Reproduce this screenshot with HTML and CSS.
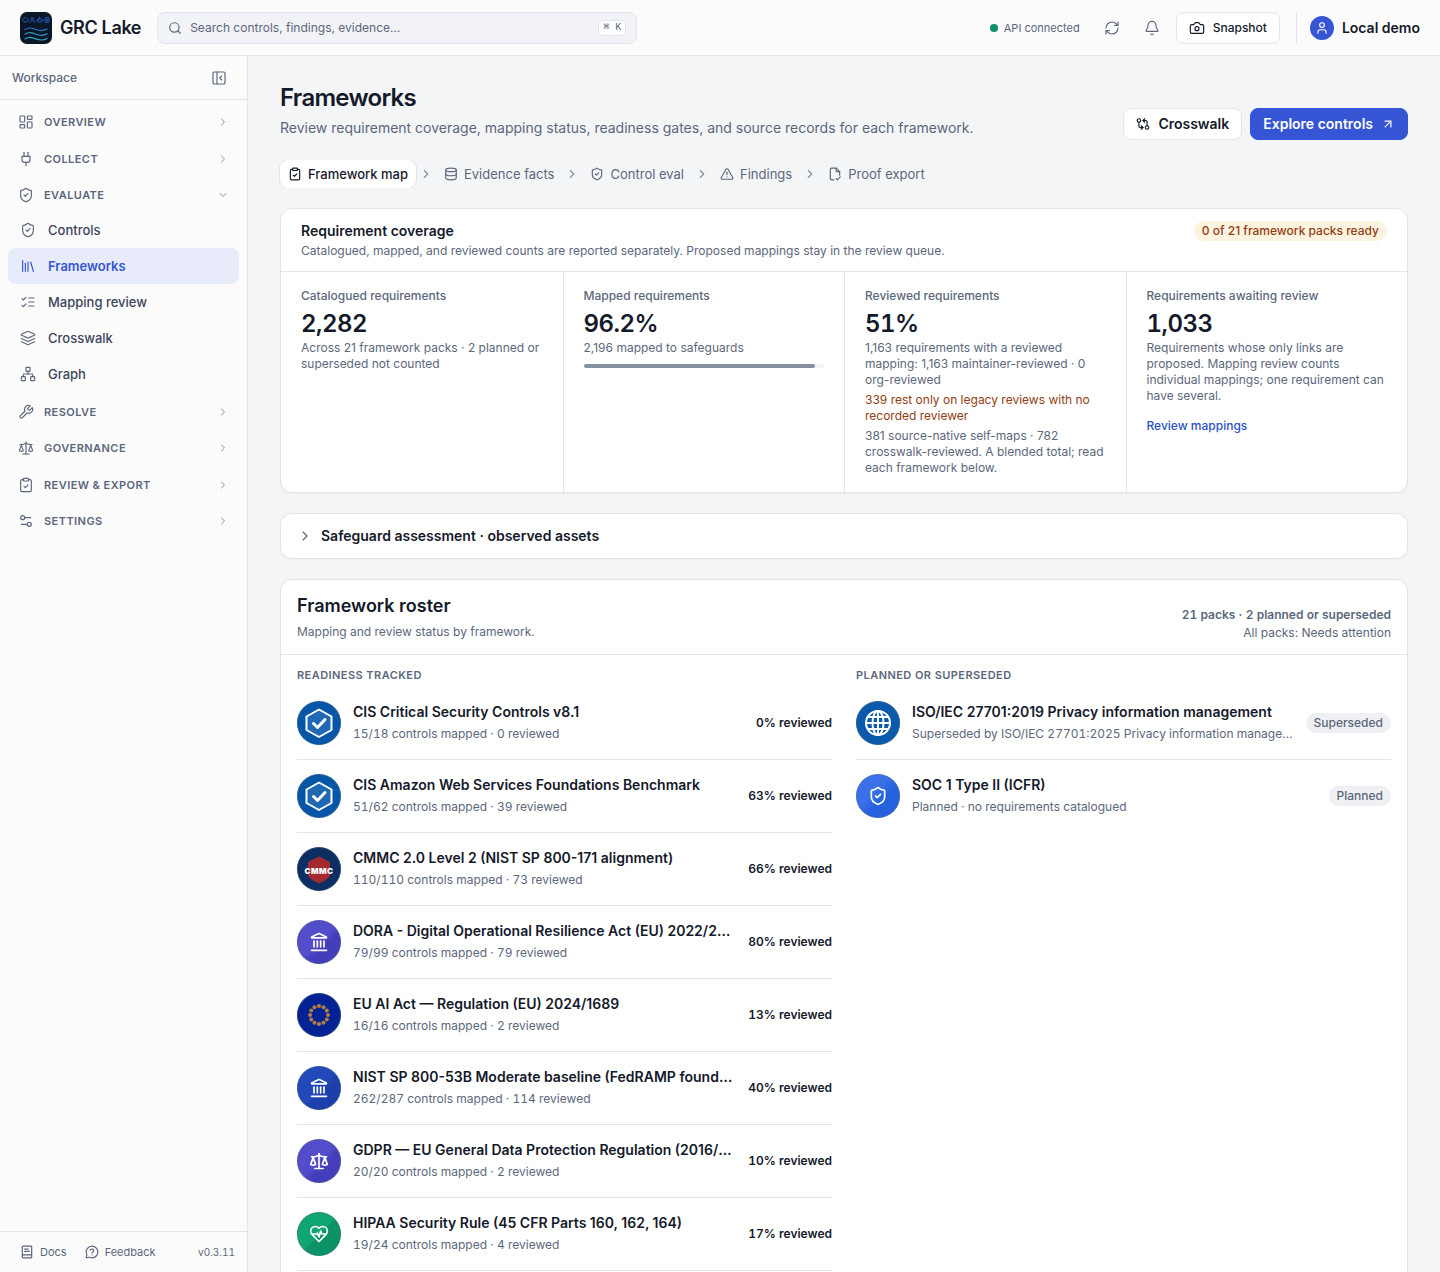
FILE: index.html
```html
<!DOCTYPE html>
<html lang="en">
<head>
<meta charset="utf-8">
<meta name="viewport" content="width=device-width, initial-scale=1">
<title>Frameworks · GRC Lake</title>
<link rel="stylesheet" href="styles.css">
</head>
<body>
<svg class="sprite" aria-hidden="true">
  <symbol id="search" viewBox="0 0 24 24"><circle cx="11" cy="11" r="8"/><path d="m21 21-4.3-4.3"/></symbol>
  <symbol id="refresh" viewBox="0 0 24 24"><path d="M3 12a9 9 0 0 1 9-9 9.75 9.75 0 0 1 6.74 2.74L21 8"/><path d="M21 3v5h-5"/><path d="M21 12a9 9 0 0 1-9 9 9.75 9.75 0 0 1-6.74-2.74L3 16"/><path d="M8 16H3v5"/></symbol>
  <symbol id="bell" viewBox="0 0 24 24"><path d="M10.268 21a2 2 0 0 0 3.464 0"/><path d="M3.262 15.326A1 1 0 0 0 4 17h16a1 1 0 0 0 .74-1.673C19.41 13.956 18 12.499 18 8A6 6 0 0 0 6 8c0 4.499-1.411 5.956-2.738 7.326"/></symbol>
  <symbol id="camera" viewBox="0 0 24 24"><path d="M14.5 4h-5L7 7H4a2 2 0 0 0-2 2v9a2 2 0 0 0 2 2h16a2 2 0 0 0 2-2V9a2 2 0 0 0-2-2h-3l-2.500-3z"/><circle cx="12" cy="13" r="3"/></symbol>
  <symbol id="user" viewBox="0 0 24 24"><circle cx="12" cy="7" r="4"/><path d="M19 21v-2a4 4 0 0 0-4-4H9a4 4 0 0 0-4 4v2"/></symbol>
  <symbol id="panel" viewBox="0 0 24 24"><rect width="18" height="18" x="3" y="3" rx="2"/><path d="M9 3v18"/><path d="m16 15-3-3 3-3"/></symbol>
  <symbol id="chevron-right" viewBox="0 0 24 24"><path d="m9 18 6-6-6-6"/></symbol>
  <symbol id="chevron-down" viewBox="0 0 24 24"><path d="m6 9 6 6 6-6"/></symbol>
  <symbol id="dashboard" viewBox="0 0 24 24"><rect width="7" height="9" x="3" y="3" rx="1"/><rect width="7" height="5" x="14" y="3" rx="1"/><rect width="7" height="9" x="14" y="12" rx="1"/><rect width="7" height="5" x="3" y="16" rx="1"/></symbol>
  <symbol id="plug" viewBox="0 0 24 24"><path d="M12 22v-5"/><path d="M9 8V2"/><path d="M15 8V2"/><path d="M18 8v5a4 4 0 0 1-4 4h-4a4 4 0 0 1-4-4V8Z"/></symbol>
  <symbol id="shield" viewBox="0 0 24 24"><path d="M20 13c0 5-3.500 7.500-7.660 8.950a1 1 0 0 1-.67-.01C7.500 20.500 4 18 4 13V6a1 1 0 0 1 1-1c2 0 4.500-1.200 6.240-2.720a1.170 1.170 0 0 1 1.520 0C14.510 3.810 17 5 19 5a1 1 0 0 1 1 1z"/><path d="m9 12 2 2 4-4"/></symbol>
  <symbol id="library" viewBox="0 0 24 24"><path d="m16 6 4 14"/><path d="M12 6v14"/><path d="M8 8v12"/><path d="M4 4v16"/></symbol>
  <symbol id="checks" viewBox="0 0 24 24"><path d="m3 17 2 2 4-4"/><path d="m3 7 2 2 4-4"/><path d="M13 6h8"/><path d="M13 12h8"/><path d="M13 18h8"/></symbol>
  <symbol id="layers" viewBox="0 0 24 24"><path d="m12.830 2.180a2 2 0 0 0-1.660 0L2.600 6.080a1 1 0 0 0 0 1.830l8.580 3.910a2 2 0 0 0 1.660 0l8.580-3.900a1 1 0 0 0 0-1.830Z"/><path d="m22 17.650-9.170 4.160a2 2 0 0 1-1.660 0L2 17.650"/><path d="m22 12.650-9.170 4.160a2 2 0 0 1-1.660 0L2 12.650"/></symbol>
  <symbol id="network" viewBox="0 0 24 24"><rect x="16" y="16" width="6" height="6" rx="1"/><rect x="2" y="16" width="6" height="6" rx="1"/><rect x="9" y="2" width="6" height="6" rx="1"/><path d="M5 16v-3a1 1 0 0 1 1-1h12a1 1 0 0 1 1 1v3"/><path d="M12 12V8"/></symbol>
  <symbol id="wrench" viewBox="0 0 24 24"><path d="M14.700 6.300a1 1 0 0 0 0 1.400l1.600 1.600a1 1 0 0 0 1.400 0l3.770-3.770a6 6 0 0 1-7.940 7.940l-6.910 6.910a2.120 2.120 0 0 1-3-3l6.910-6.910a6 6 0 0 1 7.940-7.940l-3.760 3.760z"/></symbol>
  <symbol id="scale" viewBox="0 0 24 24"><path d="m16 16 3-8 3 8c-.87.65-1.920 1-3 1s-2.130-.35-3-1Z"/><path d="m2 16 3-8 3 8c-.87.65-1.920 1-3 1s-2.130-.35-3-1Z"/><path d="M7 21h10"/><path d="M12 3v18"/><path d="M3 7h2c2 0 5-1 7-2 2 1 5 2 7 2h2"/></symbol>
  <symbol id="clipboard" viewBox="0 0 24 24"><rect width="8" height="4" x="8" y="2" rx="1"/><path d="M16 4h2a2 2 0 0 1 2 2v14a2 2 0 0 1-2 2H6a2 2 0 0 1-2-2V6a2 2 0 0 1 2-2h2"/><path d="m9 14 2 2 4-4"/></symbol>
  <symbol id="sliders" viewBox="0 0 24 24"><path d="M19 7h-9"/><path d="M14 17H5"/><circle cx="17" cy="17" r="3"/><circle cx="7" cy="7" r="3"/></symbol>
  <symbol id="book" viewBox="0 0 24 24"><path d="M4 19V5a2 2 0 0 1 2-3h13a1 1 0 0 1 1 1v18a1 1 0 0 1-1 1H6a2 2 0 0 1-2-3Z"/><path d="M4 17h16"/><path d="M8 7h6"/><path d="M8 11h8"/></symbol>
  <symbol id="help" viewBox="0 0 24 24"><path d="M2.992 16.342a2 2 0 0 1 .094 1.167l-1.065 3.290a1 1 0 0 0 1.236 1.168l3.413-.998a2 2 0 0 1 1.099.092 10 10 0 1 0-4.777-4.719"/><path d="M9.090 9a3 3 0 0 1 5.830 1c0 2-3 3-3 3"/><path d="M12 17h.01"/></symbol>
  <symbol id="compare" viewBox="0 0 24 24"><circle cx="5" cy="6" r="3"/><path d="M12 6h5a2 2 0 0 1 2 2v7"/><path d="m15 9-3-3 3-3"/><circle cx="19" cy="18" r="3"/><path d="M12 18H7a2 2 0 0 1-2-2V9"/><path d="m9 15 3 3-3 3"/></symbol>
  <symbol id="arrow" viewBox="0 0 24 24"><path d="M7 7h10v10"/><path d="M7 17 17 7"/></symbol>
  <symbol id="database" viewBox="0 0 24 24"><ellipse cx="12" cy="5" rx="9" ry="3"/><path d="M3 5v14a9 3 0 0 0 18 0V5"/><path d="M3 12a9 3 0 0 0 18 0"/></symbol>
  <symbol id="warning" viewBox="0 0 24 24"><path d="m21.730 18-8-14a2 2 0 0 0-3.480 0l-8 14A2 2 0 0 0 4 21h16a2 2 0 0 0 1.730-3"/><path d="M12 9v4"/><path d="M12 17h.01"/></symbol>
  <symbol id="file-check" viewBox="0 0 24 24"><path d="M10 22H6a2 2 0 0 1-2-2V4a2 2 0 0 1 2-2h8l6 6v6"/><path d="M14 2v5a1 1 0 0 0 1 1h5"/><path d="m14 20 2 2 5-5"/></symbol>
  <symbol id="landmark" viewBox="0 0 24 24"><path d="M3 22h18"/><path d="M6 18v-7"/><path d="M10 18v-7"/><path d="M14 18v-7"/><path d="M18 18v-7"/><path d="M11.119 2.205a2 2 0 0 1 1.762 0l7.840 3.846A.5.5 0 0 1 20.500 7h-17a.5.5 0 0 1-.22-.949z"/></symbol>
  <symbol id="heart" viewBox="0 0 24 24"><path d="M19 14c1.490-1.460 3-3.210 3-5.500A5.500 5.500 0 0 0 16.500 3c-1.760 0-3 .5-4.500 2-1.500-1.500-2.740-2-4.500-2A5.500 5.500 0 0 0 2 8.500c0 2.300 1.500 4.050 3 5.500l7 7Z"/><path d="M3.220 12H9.500l.5-1 2 4.500 2-7 1.500 3.500h5.270"/></symbol>
  <symbol id="hex-check" viewBox="0 0 44 44"><path class="hex" d="M22 8.500 34.500 15.500v13.500L22 36 9.500 29V15.500Z"/><path class="tick" d="m16.500 22.500 4 4L28 18.500"/></symbol>
  <symbol id="globe" viewBox="0 0 44 44"><circle cx="22" cy="22" r="12"/><ellipse cx="22" cy="22" rx="5.500" ry="12"/><path d="M22 10v24M10 22h24M12 16h20M12 28h20"/></symbol>
</svg>

<div class="app">
  <header class="topbar">
    <a class="brand" href="#">
      <svg class="logo" viewBox="0 0 32 32" aria-hidden="true">
        <rect width="32" height="32" rx="7" fill="#0b1727"/>
        <g fill="none" stroke="#2459b8" stroke-width="1">
          <path d="M3.500 9.700a1.500 1.500 0 0 1 0-2.800 2 2 0 0 1 3.600-.3 1.600 1.600 0 0 1 .2 3.100Z"/>
          <circle cx="12.200" cy="6.500" r="1.200"/><path d="M9.800 10.500q.5-2.500 2.400-2.500t2.400 2.500"/>
          <rect x="17.500" y="7" width="4.500" height="3" rx="1"/><path d="M19.700 5v2M16.500 8.500h1M22 8.500h1"/>
          <rect x="25" y="5.500" width="4" height="5" rx="1"/><path d="M26 7.300h2M26 8.800h2"/>
        </g>
        <g fill="none" stroke-width="1.200" stroke-linecap="round">
          <path stroke="#2878d0" d="M5 17.500c4-2.500 7-1.500 11 0s7 2 11-.5"/>
          <path stroke="#2f9fc7" d="M5 22.200c4-2.500 7-1.500 11 0s7 2 11-.5"/>
          <path stroke="#31a9c0" d="M5 26.900c4-2.500 7-1.500 11 0s7 2 11-.5"/>
        </g>
      </svg>
      <span>GRC Lake</span>
    </a>
    <label class="search">
      <svg class="icon"><use href="#search"/></svg>
      <input type="search" aria-label="Search" placeholder="Search controls, findings, evidence…">
      <kbd>⌘ K</kbd>
    </label>
    <div class="top-actions">
      <span class="status">API connected</span>
      <button class="icon-button" aria-label="Refresh"><svg class="icon"><use href="#refresh"/></svg></button>
      <button class="icon-button" aria-label="Notifications"><svg class="icon"><use href="#bell"/></svg></button>
      <button class="button button-small"><svg class="icon"><use href="#camera"/></svg>Snapshot</button>
      <div class="account">
        <button class="account-button"><span class="avatar"><svg class="icon-small"><use href="#user"/></svg></span>Local demo</button>
      </div>
    </div>
  </header>

  <aside class="sidebar">
    <div class="sidebar-head">
      <span>Workspace</span>
      <button class="icon-button" aria-label="Collapse sidebar"><svg class="icon"><use href="#panel"/></svg></button>
    </div>
    <nav class="nav" aria-label="Workspace">
      <button class="group"><svg class="icon"><use href="#dashboard"/></svg><span>Overview</span><svg class="chevron"><use href="#chevron-right"/></svg></button>
      <button class="group"><svg class="icon"><use href="#plug"/></svg><span>Collect</span><svg class="chevron"><use href="#chevron-right"/></svg></button>
      <div class="group-open">
        <button class="group" aria-expanded="true"><svg class="icon"><use href="#shield"/></svg><span>Evaluate</span><svg class="chevron"><use href="#chevron-down"/></svg></button>
        <a class="nav-item" href="#"><svg class="icon"><use href="#shield"/></svg>Controls</a>
        <a class="nav-item current" href="#" aria-current="page"><svg class="icon"><use href="#library"/></svg>Frameworks</a>
        <a class="nav-item" href="#"><svg class="icon"><use href="#checks"/></svg>Mapping review</a>
        <a class="nav-item" href="#"><svg class="icon"><use href="#layers"/></svg>Crosswalk</a>
        <a class="nav-item" href="#"><svg class="icon"><use href="#network"/></svg>Graph</a>
      </div>
      <button class="group"><svg class="icon"><use href="#wrench"/></svg><span>Resolve</span><svg class="chevron"><use href="#chevron-right"/></svg></button>
      <button class="group"><svg class="icon"><use href="#scale"/></svg><span>Governance</span><svg class="chevron"><use href="#chevron-right"/></svg></button>
      <button class="group"><svg class="icon"><use href="#clipboard"/></svg><span>Review &amp; export</span><svg class="chevron"><use href="#chevron-right"/></svg></button>
      <button class="group"><svg class="icon"><use href="#sliders"/></svg><span>Settings</span><svg class="chevron"><use href="#chevron-right"/></svg></button>
    </nav>
    <div class="sidebar-foot">
      <a href="#"><svg class="icon-small"><use href="#book"/></svg>Docs</a>
      <a href="#"><svg class="icon-small"><use href="#help"/></svg>Feedback</a>
      <span class="version">v0.3.11</span>
    </div>
  </aside>

  <main class="main">
    <div class="page-head">
      <div>
        <h1>Frameworks</h1>
        <p>Review requirement coverage, mapping status, readiness gates, and source records for each framework.</p>
      </div>
      <div class="page-actions">
        <a class="button" href="#"><svg class="icon-small"><use href="#compare"/></svg>Crosswalk</a>
        <a class="button button-primary" href="#">Explore controls<svg class="icon-small"><use href="#arrow"/></svg></a>
      </div>
    </div>

    <nav class="steps" aria-label="Pipeline">
      <a class="step active" href="#"><svg class="icon-small"><use href="#clipboard"/></svg>Framework map</a>
      <svg class="step-sep"><use href="#chevron-right"/></svg>
      <a class="step" href="#"><svg class="icon-small"><use href="#database"/></svg>Evidence facts</a>
      <svg class="step-sep"><use href="#chevron-right"/></svg>
      <a class="step" href="#"><svg class="icon-small"><use href="#shield"/></svg>Control eval</a>
      <svg class="step-sep"><use href="#chevron-right"/></svg>
      <a class="step" href="#"><svg class="icon-small"><use href="#warning"/></svg>Findings</a>
      <svg class="step-sep"><use href="#chevron-right"/></svg>
      <a class="step" href="#"><svg class="icon-small"><use href="#file-check"/></svg>Proof export</a>
    </nav>

    <section class="card">
      <div class="coverage-head">
        <div>
          <h2>Requirement coverage</h2>
          <p>Catalogued, mapped, and reviewed counts are reported separately. Proposed mappings stay in the review queue.</p>
        </div>
        <span class="pill pill-warn">0 of 21 framework packs ready</span>
      </div>
      <div class="stats">
        <div class="stat">
          <h3>Catalogued requirements</h3>
          <strong>2,282</strong>
          <p>Across 21 framework packs · 2 planned or superseded not counted</p>
        </div>
        <div class="stat">
          <h3>Mapped requirements</h3>
          <strong>96.2%</strong>
          <p>2,196 mapped to safeguards</p>
          <div class="meter"><div class="meter-fill" style="width: 96.2%"></div></div>
        </div>
        <div class="stat">
          <h3>Reviewed requirements</h3>
          <strong>51%</strong>
          <p>1,163 requirements with a reviewed mapping: 1,163 maintainer-reviewed · 0 org-reviewed</p>
          <p class="warn">339 rest only on legacy reviews with no recorded reviewer</p>
          <p>381 source-native self-maps · 782 crosswalk-reviewed. A blended total; read each framework below.</p>
        </div>
        <div class="stat">
          <h3>Requirements awaiting review</h3>
          <strong>1,033</strong>
          <p>Requirements whose only links are proposed. Mapping review counts individual mappings; one requirement can have several.</p>
          <a class="link" href="#">Review mappings</a>
        </div>
      </div>
    </section>

    <details class="card assessment">
      <summary><svg class="icon"><use href="#chevron-right"/></svg>Safeguard assessment · observed assets</summary>
    </details>

    <section class="card">
      <div class="roster-head">
        <div>
          <h2>Framework roster</h2>
          <p>Mapping and review status by framework.</p>
        </div>
        <div class="roster-summary">
          <strong>21 packs · 2 planned or superseded</strong>
          <span>All packs: Needs attention</span>
        </div>
      </div>
      <div class="roster">
        <div class="roster-column">
          <h3>Readiness tracked</h3>
          <ul>
            <li class="pack">
              <svg class="badge cis"><use href="#hex-check"/></svg>
              <div class="pack-text"><a href="#">CIS Critical Security Controls v8.1</a><p>15/18 controls mapped · 0 reviewed</p></div>
              <span class="score">0% reviewed</span>
            </li>
            <li class="pack">
              <svg class="badge cis"><use href="#hex-check"/></svg>
              <div class="pack-text"><a href="#">CIS Amazon Web Services Foundations Benchmark</a><p>51/62 controls mapped · 39 reviewed</p></div>
              <span class="score">63% reviewed</span>
            </li>
            <li class="pack">
              <svg class="badge cmmc" viewBox="0 0 44 44"><path d="M22 9.500 33 15v14l-4 4-7 3.500L15 33l-4-4V15Z" fill="#a52a2f"/><text x="22" y="27" text-anchor="middle">CMMC</text></svg>
              <div class="pack-text"><a href="#">CMMC 2.0 Level 2 (NIST SP 800-171 alignment)</a><p>110/110 controls mapped · 73 reviewed</p></div>
              <span class="score">66% reviewed</span>
            </li>
            <li class="pack">
              <span class="badge indigo"><svg><use href="#landmark"/></svg></span>
              <div class="pack-text"><a href="#">DORA - Digital Operational Resilience Act (EU) 2022/2554</a><p>79/99 controls mapped · 79 reviewed</p></div>
              <span class="score">80% reviewed</span>
            </li>
            <li class="pack">
              <svg class="badge eu" viewBox="0 0 44 44"><circle cx="22" cy="13" r="2"/><circle cx="26.500" cy="14.200" r="2"/><circle cx="29.800" cy="17.500" r="2"/><circle cx="31" cy="22" r="2"/><circle cx="29.800" cy="26.500" r="2"/><circle cx="26.500" cy="29.800" r="2"/><circle cx="22" cy="31" r="2"/><circle cx="17.500" cy="29.800" r="2"/><circle cx="14.200" cy="26.500" r="2"/><circle cx="13" cy="22" r="2"/><circle cx="14.200" cy="17.500" r="2"/><circle cx="17.500" cy="14.200" r="2"/></svg>
              <div class="pack-text"><a href="#">EU AI Act — Regulation (EU) 2024/1689</a><p>16/16 controls mapped · 2 reviewed</p></div>
              <span class="score">13% reviewed</span>
            </li>
            <li class="pack">
              <span class="badge navy"><svg><use href="#landmark"/></svg></span>
              <div class="pack-text"><a href="#">NIST SP 800-53B Moderate baseline (FedRAMP foundation)</a><p>262/287 controls mapped · 114 reviewed</p></div>
              <span class="score">40% reviewed</span>
            </li>
            <li class="pack">
              <span class="badge indigo"><svg><use href="#scale"/></svg></span>
              <div class="pack-text"><a href="#">GDPR — EU General Data Protection Regulation (2016/679)</a><p>20/20 controls mapped · 2 reviewed</p></div>
              <span class="score">10% reviewed</span>
            </li>
            <li class="pack">
              <span class="badge green"><svg><use href="#heart"/></svg></span>
              <div class="pack-text"><a href="#">HIPAA Security Rule (45 CFR Parts 160, 162, 164)</a><p>19/24 controls mapped · 4 reviewed</p></div>
              <span class="score">17% reviewed</span>
            </li>
          </ul>
        </div>
        <div class="roster-column">
          <h3>Planned or superseded</h3>
          <ul>
            <li class="pack">
              <svg class="badge iso"><use href="#globe"/></svg>
              <div class="pack-text"><a href="#">ISO/IEC 27701:2019 Privacy information management</a><p>Superseded by ISO/IEC 27701:2025 Privacy information management</p></div>
              <span class="pill">Superseded</span>
            </li>
            <li class="pack last">
              <span class="badge blue"><svg><use href="#shield"/></svg></span>
              <div class="pack-text"><a href="#">SOC 1 Type II (ICFR)</a><p>Planned · no requirements catalogued</p></div>
              <span class="pill">Planned</span>
            </li>
          </ul>
        </div>
      </div>
    </section>
  </main>
</div>
</body>
</html>
```

FILE: styles.css
```css
:root {
  --ink: #141a2a;
  --muted: #5c677b;
  --faint: #868fa0;
  --nav: #3b4659;
  --line: #e1e4ea;
  --surface: #fbfbfc;
  --page: #f4f5f7;
  --accent: #3555d4;
}

* { box-sizing: border-box; }

body {
  margin: 0;
  background: var(--page);
  color: var(--ink);
  font: 400 14px/20px Inter, "Liberation Sans", sans-serif;
}

h1, h2, h3, p, ul { margin: 0; padding: 0; }
ul { list-style: none; }
a { color: inherit; text-decoration: none; }
button, input { font: inherit; color: inherit; }
button { border: 0; background: none; padding: 0; cursor: pointer; }

svg {
  flex: none;
  fill: none;
  stroke: currentColor;
  stroke-width: 2;
  stroke-linecap: round;
  stroke-linejoin: round;
}

.sprite { display: none; }
.icon { width: 16px; height: 16px; stroke-width: 1.75; }
.icon-small { width: 14px; height: 14px; }

.app {
  display: grid;
  grid-template: "top top" 56px "side main" minmax(0, 1fr) / 248px minmax(0, 1fr);
  height: 100vh;
}

/* Top bar */
.topbar {
  grid-area: top;
  display: flex;
  align-items: center;
  gap: 16px;
  padding: 0 20px;
  background: var(--surface);
  border-bottom: 1px solid var(--line);
}

.brand {
  display: flex;
  align-items: center;
  gap: 8px;
  font-size: 18px;
  font-weight: 600;
  letter-spacing: -0.02em;
}

.logo { width: 32px; height: 32px; stroke: none; }

.search {
  display: flex;
  align-items: center;
  gap: 8px;
  width: 480px;
  height: 32px;
  padding: 0 10px;
  background: #f2f3f7;
  border: 1px solid var(--line);
  border-radius: 8px;
  color: var(--muted);
}

.search .icon { width: 14px; height: 14px; stroke-width: 2; }

.search input {
  flex: 1;
  min-width: 0;
  padding: 0;
  border: 0;
  outline: 0;
  background: none;
  font-size: 12px;
}

.search input::placeholder { color: var(--muted); opacity: 1; }

kbd {
  padding: 0 4px;
  background: #fff;
  border: 1px solid var(--line);
  border-radius: 4px;
  font: 10px/14px "Liberation Mono", "DejaVu Sans Mono", monospace;
}

.top-actions {
  display: flex;
  align-items: center;
  gap: 8px;
  margin-left: auto;
}

.status {
  display: flex;
  align-items: center;
  gap: 6px;
  margin-right: 8px;
  color: var(--muted);
  font-size: 11px;
}

.status::before {
  content: "";
  width: 8px;
  height: 8px;
  border-radius: 50%;
  background: #0b8f68;
}

.icon-button {
  display: grid;
  place-items: center;
  width: 32px;
  height: 32px;
  color: var(--muted);
}

.button {
  display: flex;
  align-items: center;
  gap: 8px;
  height: 32px;
  padding: 0 12px;
  background: #fff;
  border: 1px solid var(--line);
  border-radius: 8px;
  font-weight: 600;
}

.button-small { font-size: 12px; font-weight: 500; }

.button-primary {
  background: var(--accent);
  border-color: var(--accent);
  color: #fff;
}

.account {
  display: flex;
  align-items: center;
  height: 32px;
  margin-left: 8px;
  padding-left: 13px;
  border-left: 1px solid var(--line);
}

.account-button {
  display: flex;
  align-items: center;
  gap: 8px;
  font-weight: 600;
}

.avatar {
  display: grid;
  place-items: center;
  width: 24px;
  height: 24px;
  border-radius: 50%;
  background: var(--accent);
  color: #fff;
}

/* Sidebar */
.sidebar {
  grid-area: side;
  display: flex;
  flex-direction: column;
  background: var(--surface);
  border-right: 1px solid var(--line);
}

.sidebar-head {
  display: flex;
  align-items: center;
  justify-content: space-between;
  height: 44px;
  padding: 0 12px;
  border-bottom: 1px solid var(--line);
  color: var(--muted);
  font-size: 12px;
  font-weight: 500;
}

.nav {
  display: flex;
  flex: 1;
  flex-direction: column;
  gap: 4px;
  padding: 6px 8px;
}

.group {
  display: flex;
  align-items: center;
  gap: 10px;
  width: 100%;
  padding: 8px 10px;
  color: var(--muted);
  font-size: 11px;
  font-weight: 600;
  line-height: 1.5;
  letter-spacing: 0.04em;
  text-transform: uppercase;
}

.chevron {
  width: 12px;
  height: 12px;
  margin-left: auto;
  color: var(--faint);
}

.nav-item {
  display: flex;
  align-items: center;
  gap: 12px;
  height: 36px;
  padding: 0 12px;
  border-radius: 8px;
  color: var(--nav);
  font-size: 13px;
  font-weight: 500;
}

.nav-item .icon { color: var(--muted); }

.nav-item.current {
  background: #e8ecfa;
  color: var(--accent);
  font-weight: 600;
}

.nav-item.current .icon { color: var(--accent); }

.sidebar-foot {
  display: flex;
  align-items: center;
  gap: 18px;
  height: 41px;
  padding: 0 12px 0 20px;
  border-top: 1px solid var(--line);
  color: var(--muted);
  font-size: 11px;
}

.sidebar-foot a { display: flex; align-items: center; gap: 6px; }
.version { margin-left: auto; font-size: 10px; font-variant-numeric: tabular-nums; }

/* Page */
.main {
  grid-area: main;
  display: flex;
  flex-direction: column;
  gap: 20px;
  padding: 24px 32px;
  overflow-y: auto;
  scrollbar-width: none;
}

.main > * { flex: none; }

.page-head {
  display: flex;
  align-items: flex-end;
  justify-content: space-between;
  gap: 24px;
}

h1 {
  padding-top: 2px;
  margin-bottom: 2px;
  font-size: 24px;
  font-weight: 600;
  line-height: 32px;
  letter-spacing: -0.03em;
}

.page-head p { color: var(--muted); line-height: 24px; }
.page-actions { display: flex; gap: 8px; }

.steps { display: flex; align-items: center; }

.step {
  display: flex;
  align-items: center;
  gap: 6px;
  height: 28px;
  padding: 0 8px;
  border-radius: 8px;
  color: var(--muted);
  font-size: 13px;
}

.step.active {
  background: #fff;
  box-shadow: 0 0 0 1px var(--line);
  clip-path: inset(0 -1px);
  color: var(--ink);
  font-weight: 500;
}

.step-sep {
  width: 14px;
  height: 14px;
  margin: 0 3px;
  color: var(--faint);
}

.card {
  background: #fff;
  border: 1px solid var(--line);
  border-radius: 12px;
  box-shadow: 0 1px 2px rgb(20 26 42 / 4%);
}

.coverage-head {
  display: flex;
  align-items: flex-start;
  justify-content: space-between;
  padding: 12px 20px;
  border-bottom: 1px solid var(--line);
}

h2 { font-size: 14px; font-weight: 600; }

.coverage-head p {
  margin-top: 2px;
  color: var(--muted);
  font-size: 12px;
  line-height: 16px;
}

.pill {
  flex: none;
  padding: 0 8px;
  border-radius: 10px;
  background: #eef0f4;
  color: var(--muted);
  font-size: 12px;
  font-weight: 500;
}

.pill-warn { background: #fdf3e1; color: #93400f; }

.stats { display: grid; grid-template-columns: repeat(4, minmax(0, 1fr)); }

.stat {
  padding: 16px 20px;
  color: var(--muted);
  font-size: 12px;
  line-height: 16px;
}

.stat + .stat { border-left: 1px solid var(--line); }
.stat h3 { font-size: 12px; font-weight: 500; }

.stat strong {
  display: block;
  margin-top: 4px;
  color: var(--ink);
  font-size: 24px;
  font-weight: 600;
  font-variant-numeric: tabular-nums;
  line-height: 32px;
  letter-spacing: -0.02em;
}

.stat p + p { margin-top: 4px; }
.stat .warn { color: #93400f; }

.meter {
  height: 4px;
  margin-top: 8px;
  border-radius: 2px;
  background: #f2f3f7;
}

.meter-fill { height: 4px; border-radius: 2px; background: #8590a2; }

.link {
  display: inline-block;
  margin-top: 12px;
  color: #2c52c8;
  font-weight: 500;
  line-height: 20px;
}

.assessment summary {
  display: flex;
  align-items: center;
  gap: 8px;
  height: 44px;
  padding: 0 16px;
  font-weight: 600;
  cursor: pointer;
}

.assessment .icon { color: var(--muted); }

/* Roster */
.roster-head {
  display: flex;
  align-items: flex-end;
  justify-content: space-between;
  padding: 12px 16px;
  border-bottom: 1px solid var(--line);
  color: var(--muted);
  font-size: 12px;
}

.roster-head h2 {
  margin-bottom: 2px;
  color: var(--ink);
  font-size: 18px;
  line-height: 28px;
}

.roster-summary {
  display: flex;
  flex-direction: column;
  line-height: 18px;
  text-align: right;
}

.roster-summary strong { font-weight: 600; font-variant-numeric: tabular-nums; }

.roster {
  display: grid;
  grid-template-columns: repeat(2, minmax(0, 1fr));
  gap: 24px;
  padding: 12px 16px 16px;
}

.roster h3 {
  margin-bottom: 4px;
  color: var(--muted);
  font-size: 11px;
  font-weight: 600;
  line-height: 16px;
  letter-spacing: 0.04em;
  text-transform: uppercase;
}

.pack {
  display: flex;
  align-items: center;
  gap: 12px;
  padding: 14px 0;
  border-bottom: 1px solid var(--line);
}

.pack.last { border-bottom: 0; }
.pack-text { flex: 1; min-width: 0; }

.pack-text a, .pack-text p {
  display: block;
  overflow: hidden;
  text-overflow: ellipsis;
  white-space: nowrap;
}

.pack-text a { font-weight: 600; }

.pack-text p {
  margin-top: 2px;
  color: var(--muted);
  font-size: 12px;
  font-variant-numeric: tabular-nums;
}

.score { font-size: 12px; font-weight: 600; font-variant-numeric: tabular-nums; }

.badge {
  display: grid;
  flex: none;
  place-items: center;
  width: 44px;
  height: 44px;
  border-radius: 50%;
  box-shadow: inset 0 0 0 1px rgb(90 110 130 / 40%);
  color: #fff;
}

.badge svg { width: 20px; height: 20px; }
.cis { background: #0656a8; }
.hex { fill: #2068b4; }
.tick { stroke-width: 3; }
.cmmc { background: #0b2e63; stroke: none; }
.cmmc text { fill: #fff; font: 900 8px Inter, sans-serif; letter-spacing: 0.05em; }
.iso { background: #0a5aab; }
.eu { background: #022294; fill: #b5803f; stroke: none; }
.indigo { background: linear-gradient(135deg, #534dcc 50%, #453ebb 60%); }
.navy { background: linear-gradient(135deg, #2149b9 50%, #1c3faa 60%); }
.green { background: linear-gradient(135deg, #0fa673 50%, #0b9367 52%); }
.blue { background: linear-gradient(135deg, #3a71e8 40%, #2560df 60%); }
```
